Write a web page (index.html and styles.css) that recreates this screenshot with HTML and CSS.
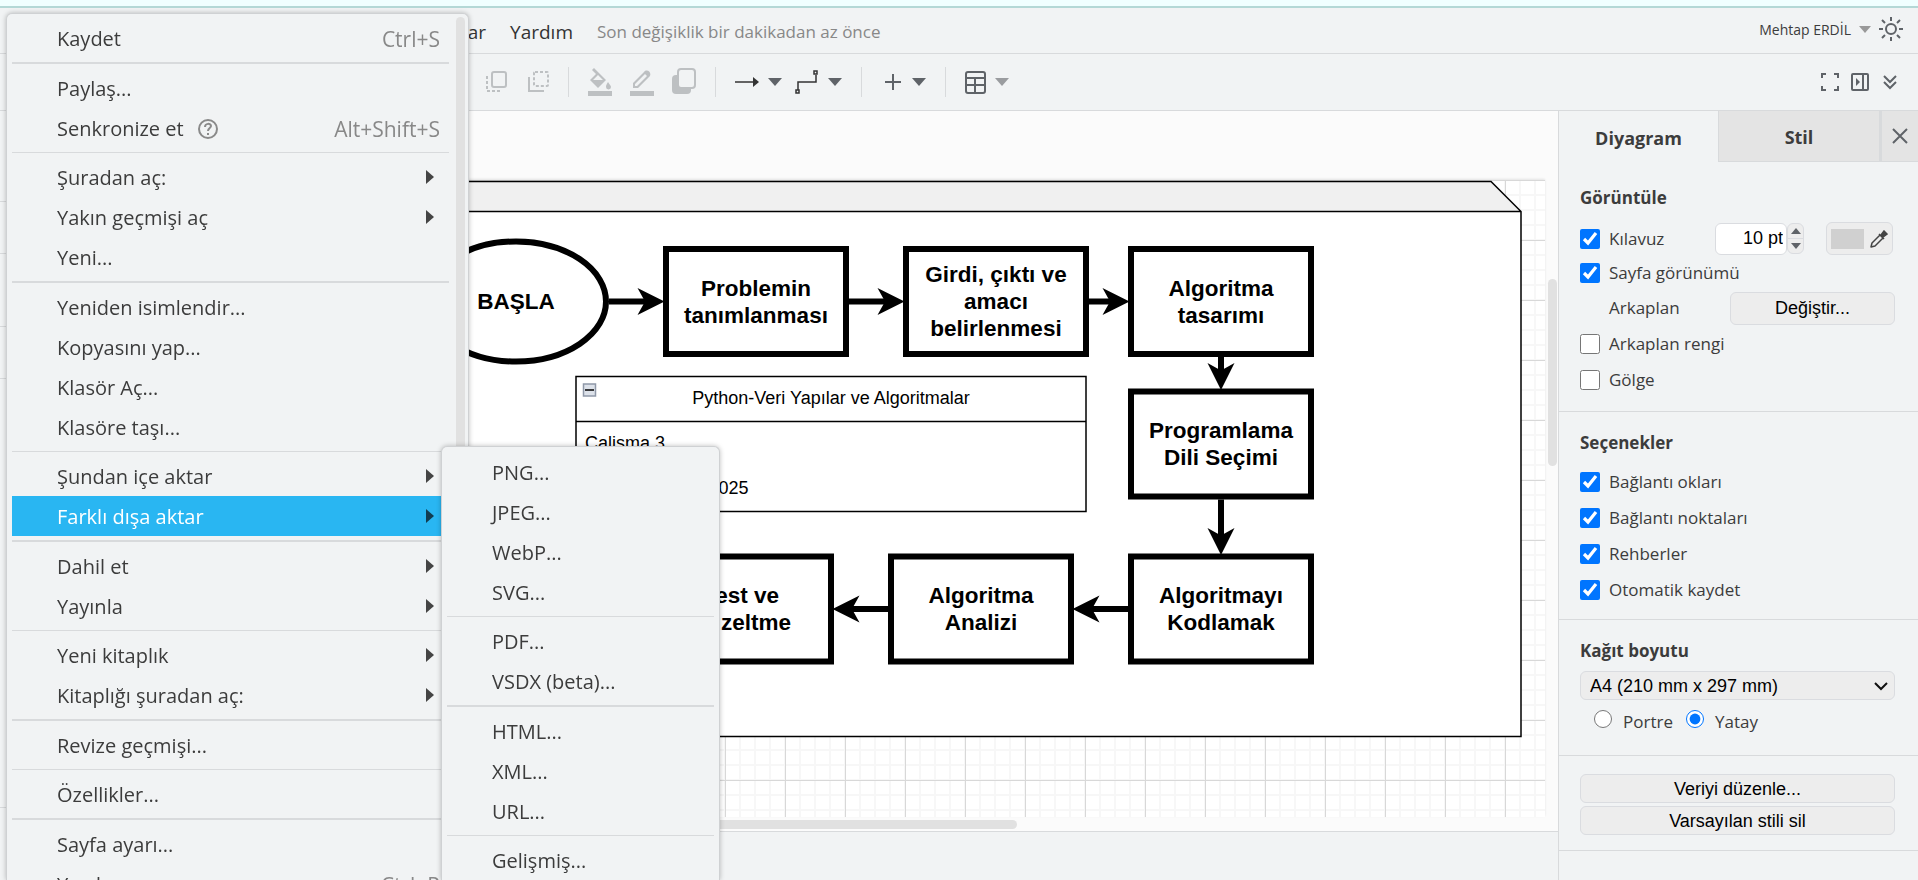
FILE: index.html
```html
<!DOCTYPE html>
<html lang="tr">
<head>
<meta charset="utf-8">
<title>Diyagram</title>
<link rel="stylesheet" href="styles.css">
</head>
<body>
<div class="strip"></div>
<header class="menubar">
  <nav class="menubar-nav">
    <a href="#">Ekstralar</a><a href="#">Yardım</a>
  </nav>
  <span class="status">Son değişiklik bir dakikadan az önce</span>
  <button class="user" type="button">Mehtap ERDİL <span class="caret caret-user"></span></button>
  <button class="icon-btn" type="button" aria-label="Görünüm">
    <svg width="26" height="26" viewBox="0 0 26 26" fill="none" stroke="#5f6368" stroke-width="2"><circle cx="13" cy="13" r="5"/><path d="M13 1v4M13 21v4M1 13h4M21 13h4M4 4l3 3M19 19l3 3M22 4l-3 3M7 19l-3 3"/></svg>
  </button>
</header>
<div class="toolbar">
  <div class="tools order">
    <button class="tool off" type="button" aria-label="Öne getir"><svg width="21" height="22" viewBox="0 0 21 22" fill="none" stroke="#5f6368" stroke-width="2"><rect x="6" y="1" width="14" height="15" rx="2"/><path d="M1 5v15h15" stroke-dasharray="3 2"/></svg></button>
    <button class="tool off" type="button" aria-label="Arkaya gönder"><svg width="21" height="22" viewBox="0 0 21 22" fill="none" stroke="#5f6368" stroke-width="2"><path d="M1 6v14h15"/><rect x="6" y="1" width="14" height="14" rx="1" stroke-dasharray="3 2"/></svg></button>
  </div>
  <span class="rule"></span>
  <div class="tools colors">
    <button class="tool off" type="button" aria-label="Dolgu rengi"><svg width="24" height="28" viewBox="0 0 24 28" fill="#5f6368"><path d="M4 2l2-2 12 12-8 8-8-8 6-6zM10 7l-5 5h10z" fill-rule="evenodd"/><path d="M20 14c2 3 3 4 3 5a2 2 0 0 1-5 0c0-1 0-2 2-5zM0 23h24v5H0z"/></svg></button>
    <button class="tool off" type="button" aria-label="Çizgi rengi"><svg width="24" height="28" viewBox="0 0 24 28" fill="#5f6368"><path d="M3 15L14 4c3-4 9 1 5 5L8 20H3zM5 18h2L17 8l-2-2L5 16z" fill-rule="evenodd"/><path d="M0 23h24v5H0z"/></svg></button>
    <button class="tool off" type="button" aria-label="Gölge"><svg width="24" height="28" viewBox="0 0 24 28"><rect x="0" y="7" width="19" height="19" rx="4" fill="#5f6368"/><rect x="6" y="1" width="17" height="19" rx="3" fill="#f1f3f4" stroke="#5f6368" stroke-width="2"/></svg></button>
  </div>
  <span class="rule"></span>
  <div class="tools lines">
    <button class="tool" type="button" aria-label="Bağlantı"><svg width="24" height="10" viewBox="0 0 24 10"><path d="M0 5h19" stroke="#333" stroke-width="1.5"/><path d="M18 0l6 5-6 5z" fill="#333"/></svg><span class="caret"></span></button>
    <button class="tool" type="button" aria-label="Ara noktalar"><svg width="24" height="24" viewBox="0 0 24 24" fill="none" stroke="#333" stroke-width="1.5"><path d="M3 20v-8h18V5"/><rect x="1" y="20" width="3" height="3"/><rect x="19" y="1" width="3" height="3"/></svg><span class="caret"></span></button>
  </div>
  <span class="rule"></span>
  <button class="tool" type="button" aria-label="Ekle"><svg width="22" height="18" viewBox="0 0 22 18"><path d="M12 1v16M4 9h16" stroke="#5f6368" stroke-width="2"/></svg><span class="caret"></span></button>
  <span class="rule"></span>
  <button class="tool" type="button" aria-label="Tablo"><svg width="21" height="23" viewBox="0 0 21 23" fill="none" stroke="#5f6368" stroke-width="2"><rect x="1" y="1" width="19" height="21" rx="2"/><path d="M1 7h19M1 14h19M10 7v15"/></svg><span class="caret caret-light"></span></button>
  <span class="views">
    <button class="tool" type="button" aria-label="Tam ekran"><svg width="20" height="20" viewBox="0 0 20 20" fill="none" stroke="#5f6368" stroke-width="2"><path d="M2 6V2h4M14 2h4v4M18 14v4h-4M6 18H2v-4"/></svg></button>
    <button class="tool" type="button" aria-label="Biçim paneli"><svg width="20" height="20" viewBox="0 0 20 20" fill="none" stroke="#5f6368" stroke-width="2"><rect x="2" y="2" width="16" height="16" rx="1"/><path d="M13 2v16"/><path d="M6 6l4 4-4 4z" fill="#5f6368" stroke="none"/></svg></button>
    <button class="tool" type="button" aria-label="Daralt"><svg width="20" height="20" viewBox="0 0 20 20" fill="none" stroke="#5f6368" stroke-width="2"><path d="M4 4l6 6 6-6M4 10l6 6 6-6"/></svg></button>
  </span>
</div>

<main class="workspace">
  <aside class="sidebar">
    <div class="shelf"></div><div class="shelf shelf-s"></div><div class="shelf shelf-m"></div><div class="shelf shelf-s"></div><div class="shelf shelf-l"></div>
  </aside>
  <section class="center">
    <div class="canvas">
      <div class="page">
        <svg class="diagram" width="1290" height="630" viewBox="164 0 860 420">
          <path d="M184 1H994L1014 21V371H184z" fill="#fff"/>
          <path d="M184 1H994L1014 21H184z" fill="#f0f0f0"/>
          <path d="M184 1H994L1014 21V371H184zM184 21H1014" fill="none" stroke="#000"/>
          <g fill="#fff" stroke="#000" stroke-width="4">
            <ellipse cx="344" cy="81" rx="60" ry="40"/>
            <rect x="444" y="46" width="120" height="70"/>
            <rect x="604" y="46" width="120" height="70"/>
            <rect x="754" y="46" width="120" height="70"/>
            <rect x="754" y="141" width="120" height="70"/>
            <rect x="754" y="251" width="120" height="70"/>
            <rect x="594" y="251" width="120" height="70"/>
            <rect x="434" y="251" width="120" height="70"/>
            <path d="M406 81h29M566 81h29M726 81h19M814 118v14M814 213v29M752 286h-29M592 286h-29"/>
          </g>
          <g fill="#000">
            <path d="M443 81l-18 9 5-9-5-9z"/>
            <path d="M603 81l-18 9 5-9-5-9z"/>
            <path d="M753 81l-18 9 5-9-5-9z"/>
            <path d="M814 140l9-18-9 5-9-5z"/>
            <path d="M814 250l9-18-9 5-9-5z"/>
            <path d="M715 286l18 9-5-9 5-9z"/>
            <path d="M555 286l18 9-5-9 5-9z"/>
          </g>
          <rect x="384" y="131" width="340" height="90" fill="#fff" stroke="#000"/>
          <path d="M384 161h340" stroke="#000"/>
          <rect x="389" y="136" width="8" height="8" fill="#dde2ea" stroke="#8f98a8"/>
          <path d="M390 140h6" stroke="#000"/>
          <g class="node-text">
            <text x="344" y="86">BAŞLA</text>
            <text x="504" y="77">Problemin</text><text x="504" y="95">tanımlanması</text>
            <text x="664" y="68">Girdi, çıktı ve</text><text x="664" y="86">amacı</text><text x="664" y="104">belirlenmesi</text>
            <text x="814" y="77">Algoritma</text><text x="814" y="95">tasarımı</text>
            <text x="814" y="172">Programlama</text><text x="814" y="190">Dili Seçimi</text>
            <text x="814" y="282">Algoritmayı</text><text x="814" y="300">Kodlamak</text>
            <text x="654" y="282">Algoritma</text><text x="654" y="300">Analizi</text>
            <text x="494" y="282">Test ve</text><text x="494" y="300">Düzeltme</text>
          </g>
          <g class="list-text">
            <text x="554" y="149" text-anchor="middle">Python-Veri Yapılar ve Algoritmalar</text>
            <text x="390" y="179">Calisma 3</text>
            <text x="499" y="209" text-anchor="end">2025</text>
          </g>
        </svg>
      </div>
      <div class="scroll scroll-v"></div>
      <div class="scroll scroll-h"></div>
    </div>
    <footer class="tabs-bar"></footer>
  </section>

  <aside class="format">
    <div class="format-tabs">
      <button class="ftab active" type="button">Diyagram</button>
      <button class="ftab" type="button">Stil</button>
      <button class="ftab close" type="button" aria-label="Kapat"><svg width="16" height="16" viewBox="0 0 16 16"><path d="M1 1l14 14M15 1L1 15" stroke="#5f6368" stroke-width="2"/></svg></button>
    </div>
    <section class="group first">
      <h2>Görüntüle</h2>
      <div class="row">
        <label><input type="checkbox" checked>Kılavuz</label>
        <input class="num" type="text" value="10 pt" aria-label="Kılavuz boyutu">
        <span class="spin"><button type="button" aria-label="Artır"><i class="up"></i></button><button type="button" aria-label="Azalt"><i class="down"></i></button></span>
        <button class="color" type="button" aria-label="Kılavuz rengi"><span class="swatch"></span><svg width="18" height="18" viewBox="0 0 18 18" fill="none" stroke="#444" stroke-width="1.5"><path d="M10 5L2 13l-1 4 4-1 8-8M9 4l5 5" stroke-linejoin="round"/><path d="M11 5l3-4 3 3-4 3z" fill="#444"/></svg></button>
      </div>
      <div class="row"><label><input type="checkbox" checked>Sayfa görünümü</label></div>
      <div class="row"><span class="indent">Arkaplan</span><button class="btn change" type="button">Değiştir...</button></div>
      <div class="row"><label><input type="checkbox">Arkaplan rengi</label></div>
      <div class="row"><label><input type="checkbox">Gölge</label></div>
    </section>
    <section class="group">
      <h2>Seçenekler</h2>
      <div class="row"><label><input type="checkbox" checked>Bağlantı okları</label></div>
      <div class="row"><label><input type="checkbox" checked>Bağlantı noktaları</label></div>
      <div class="row"><label><input type="checkbox" checked>Rehberler</label></div>
      <div class="row"><label><input type="checkbox" checked>Otomatik kaydet</label></div>
    </section>
    <section class="group paper">
      <h2>Kağıt boyutu</h2>
      <div class="select-wrap">
        <select class="btn" aria-label="Kağıt boyutu"><option>A4 (210 mm x 297 mm)</option></select>
        <svg width="14" height="10" viewBox="0 0 14 10"><path d="M1 2l6 6 6-6" fill="none" stroke="#111" stroke-width="2"/></svg>
      </div>
      <div class="row radios">
        <label><input type="radio" name="yon">Portre</label>
        <label><input type="radio" name="yon" checked>Yatay</label>
      </div>
    </section>
    <section class="group actions">
      <button class="btn" type="button">Veriyi düzenle...</button>
      <button class="btn" type="button">Varsayılan stili sil</button>
    </section>
  </aside>
</main>

<div class="menu file-menu" role="menu">
  <button role="menuitem">Kaydet<kbd>Ctrl+S</kbd></button>
  <hr class="thick">
  <button role="menuitem">Paylaş...</button>
  <button role="menuitem">Senkronize et<svg class="help" width="20" height="20" viewBox="0 0 20 20" fill="none" stroke="#8a8a8a" stroke-width="2"><circle cx="10" cy="10" r="9"/><path d="M7 8c0-4 6-4 6-1 0 2-3 2-3 5M10 14v2"/></svg><kbd>Alt+Shift+S</kbd></button>
  <hr>
  <button role="menuitem" class="sub">Şuradan aç:</button>
  <button role="menuitem" class="sub">Yakın geçmişi aç</button>
  <button role="menuitem">Yeni...</button>
  <hr class="thick">
  <button role="menuitem">Yeniden isimlendir...</button>
  <button role="menuitem">Kopyasını yap...</button>
  <button role="menuitem">Klasör Aç...</button>
  <button role="menuitem">Klasöre taşı...</button>
  <hr>
  <button role="menuitem" class="sub">Şundan içe aktar</button>
  <button role="menuitem" class="sub selected">Farklı dışa aktar</button>
  <hr class="thick">
  <button role="menuitem" class="sub">Dahil et</button>
  <button role="menuitem" class="sub">Yayınla</button>
  <hr>
  <button role="menuitem" class="sub">Yeni kitaplık</button>
  <button role="menuitem" class="sub">Kitaplığı şuradan aç:</button>
  <hr class="thick">
  <button role="menuitem">Revize geçmişi...</button>
  <hr>
  <button role="menuitem">Özellikler...</button>
  <hr class="thick">
  <button role="menuitem">Sayfa ayarı...</button>
  <button role="menuitem">Yazdır...<kbd>Ctrl+P</kbd></button>
  <div class="scroll menu-scroll"></div>
</div>
<div class="menu export-menu" role="menu">
  <button role="menuitem">PNG...</button>
  <button role="menuitem">JPEG...</button>
  <button role="menuitem">WebP...</button>
  <button role="menuitem">SVG...</button>
  <hr>
  <button role="menuitem">PDF...</button>
  <button role="menuitem">VSDX (beta)...</button>
  <hr class="thick">
  <button role="menuitem">HTML...</button>
  <button role="menuitem">XML...</button>
  <button role="menuitem">URL...</button>
  <hr>
  <button role="menuitem">Gelişmiş...</button>
</div>
</body>
</html>
```
FILE: styles.css
```css
* { box-sizing: border-box; }
:root {
  --chrome: #f1f3f4;
  --line: #d8dadc;
  --text: #3c3c3c;
  --ui: "Open Sans", "Noto Sans", sans-serif;
  --arial: "Liberation Sans", Arial, sans-serif;
}
body {
  margin: 0;
  height: 100vh;
  overflow: hidden;
  display: flex;
  flex-direction: column;
  background: var(--chrome);
  color: var(--text);
  font: 17px/24px var(--ui);
}
button, input, select { font: inherit; color: inherit; margin: 0; }
button { border: 0; padding: 0; background: none; }

/* header */
.strip { height: 8px; flex: none; background: #f0ffff; border-bottom: 2px solid #b4d8d6; }
.menubar {
  flex: none; height: 46px; display: flex; align-items: center;
  padding: 2px 14px 0 0; border-bottom: 1px solid var(--line);
}
.menubar-nav { width: 573px; display: flex; justify-content: flex-end; gap: 24px; font-size: 19px; }
.menubar-nav a { color: #333; text-decoration: none; }
.status { margin-left: 24px; color: #888; }
.user { margin-left: auto; display: flex; align-items: center; gap: 8px; font-size: 14px; padding-bottom: 4px; }
.icon-btn { display: flex; margin-left: 7px; padding-bottom: 6px; }
.caret { border: 7px solid transparent; border-top: 8px solid #5f6368; border-bottom: 0; }
.caret-user { border-width: 7px 6px 0; border-top-color: #999; }
.caret-light { border-top-color: #9a9c9f; }

.toolbar {
  flex: none; height: 57px; display: flex; align-items: center; gap: 19px;
  padding: 0 18px 0 486px; border-bottom: 1px solid var(--line);
}
.tools { display: flex; align-items: center; }
.order { gap: 21px; }
.colors { gap: 18px; }
.lines { gap: 13px; }
.tool { display: flex; align-items: center; gap: 9px; }
.off { opacity: .35; }
.rule { width: 1px; height: 30px; background: var(--line); }
.views { margin-left: auto; display: flex; gap: 10px; }

/* workspace */
.workspace { flex: 1; min-height: 0; display: flex; }
.sidebar { width: 246px; flex: none; }
.shelf { height: 91px; border-bottom: 1px solid var(--line); }
.shelf-s { height: 52px; }
.shelf-m { height: 73px; }
.shelf-l { height: 429px; }
.center { flex: 1; min-width: 0; display: flex; flex-direction: column; }
.canvas {
  position: relative; flex: 1; min-height: 0; display: flex;
  padding: 69px 13px 14px 0; background: #fbfbfb;
}
.page {
  flex: 1; min-width: 0; overflow: hidden;
  box-shadow: 0 -1px 2px #e4e4e4;
  background-color: #fff;
  background-image:
    linear-gradient(90deg, #d8d8d8 1px, transparent 1px),
    linear-gradient(#d8d8d8 1px, transparent 1px),
    linear-gradient(90deg, #f7f7f7 2px, transparent 2px),
    linear-gradient(#f7f7f7 2px, transparent 2px);
  background-size: 60px 60px, 60px 60px, 15px 15px, 15px 15px;
  background-position: -1px 0, -1px 0, -2px -1px, -2px -1px;
}
.diagram { display: block; }
.node-text { font: bold 15px var(--arial); text-anchor: middle; }
.list-text { font: 12px var(--arial); }
.scroll { position: absolute; background: #e1e1e1; border-radius: 5px; }
.scroll-v { right: 1px; top: 168px; width: 9px; height: 187px; }
.scroll-h { left: 100px; bottom: 2px; width: 671px; height: 9px; }
.tabs-bar { flex: none; height: 49px; border-top: 1px solid var(--line); }

/* format panel */
.format { width: 360px; flex: none; border-left: 1px solid var(--line); }
.format-tabs { display: grid; grid-template-columns: 159px 162px 1fr; height: 51px; }
.ftab { background: #e4e4e4; border: 1px solid var(--line); border-top: 0; font-weight: 700; font-size: 18px; padding-top: 2px; }
.ftab.active { background: none; border: 0; }
.ftab.close { border-left-width: 2px; border-right: 0; display: grid; place-items: center; padding: 0; }
.group { padding: 19px 23px 11px 21px; border-bottom: 1px solid var(--line); }
.group.first { padding: 24px 23px 13px 21px; }
.group h2 { margin: 0 0 9px; font-size: 17px; line-height: 24px; }
.first h2 { margin-bottom: 11px; }
.row { height: 36px; display: flex; align-items: center; }
.first .row:nth-child(2) { height: 35px; }
.first .row:nth-child(3) { height: 34px; }
.row label { display: flex; align-items: center; }
.row input[type="checkbox"] { width: 20px; height: 20px; margin-right: 9px; accent-color: #0075ff; }
.indent { padding-left: 29px; }
.btn, .num, .color, .spin { border: 1px solid #dadce0; border-radius: 6px; background: #ededed; }
.btn, .num { font: 18px/24px var(--arial); color: #000; }
.btn { height: 29px; width: 100%; }
.btn.change { width: 165px; height: 33px; margin-left: auto; }
.num { width: 72px; height: 32px; background: #fff; text-align: right; padding: 0 3px; margin-left: auto; }
.spin { width: 17px; height: 31px; display: grid; }
.spin button { display: grid; place-items: center; }
.spin button + button { border-top: 1px solid #dadce0; }
.up, .down { border: 5px solid transparent; }
.up { border-top: 0; border-bottom: 6px solid #5f6368; }
.down { border-bottom: 0; border-top: 6px solid #5f6368; }
.color { width: 67px; height: 33px; margin: 0 2px 0 22px; display: flex; align-items: center; justify-content: center; gap: 6px; }
.swatch { width: 33px; height: 20px; background: #d0d0d0; }
.select-wrap { position: relative; display: flex; }
.select-wrap select { appearance: none; padding: 0 9px; }
.select-wrap svg { position: absolute; right: 7px; top: 10px; pointer-events: none; }
.paper h2 { margin-bottom: 8px; }
.paper { padding-bottom: 15px; }
.radios { gap: 13px; padding-left: 14px; margin-top: 4px; }
.row.radios label { align-items: baseline; }
.radios input { width: 18px; height: 18px; margin-right: 11px; accent-color: #0075ff; }
.actions { display: grid; gap: 3px; padding: 18px 23px 15px 21px; }

/* drop-down menus */
.menu {
  position: fixed; bottom: 0; overflow: hidden;
  background: var(--chrome); border: 1px solid #cfd1d3; border-bottom: 0;
  border-radius: 6px 6px 0 0; box-shadow: 0 0 5px rgba(0, 0, 0, .25);
  padding: 5px;
}
.menu button {
  display: flex; align-items: center; width: 100%; height: 40px;
  padding: 2px 9px 0 45px; font-size: 20px; text-align: left; color: #3c3c3c;
}
.menu kbd { margin-left: auto; font: inherit; font-size: 21px; color: #888; }
.menu hr { margin: 4px 0; border: 0; height: 1px; background: #d8dadc; }
.menu hr.thick { height: 2px; }
.menu .sub::after { content: ""; margin: 0 6px 2px auto; border: 7px solid transparent; border-left: 8px solid #444; border-right: 0; }
.menu .selected { background: #29b6f2; color: #fff; }
.menu .selected::after { border-left-color: #123c50; }
.help { margin-left: 14px; }
.file-menu { left: 6px; top: 13px; width: 463px; padding: 4px 19px 0 5px; }
.menu-scroll { right: 3px; top: 3px; width: 9px; height: 700px; }
.export-menu { left: 441px; top: 446px; width: 279px; }
```
